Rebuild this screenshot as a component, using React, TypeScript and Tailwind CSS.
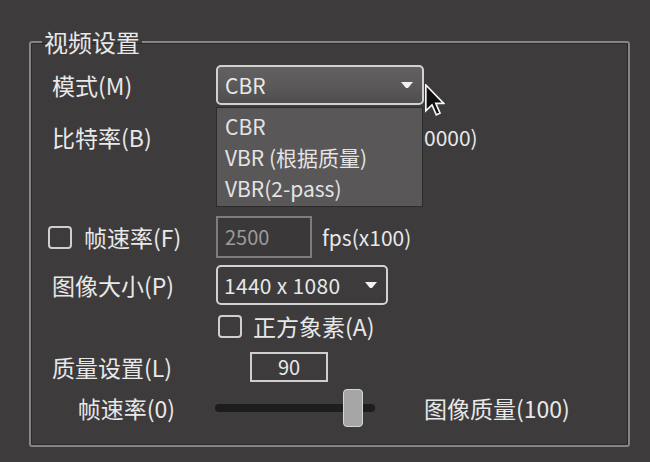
import React from "react"

const font = { fontFamily: '"Noto Sans CJK SC", "Noto Sans", sans-serif' }

function DownArrow() {
  return (
    <svg width="12" height="7" viewBox="0 0 12 7" className="shrink-0">
      <path d="M0 0 H12 L7 6 H5 Z" fill="#f2f2f2" />
    </svg>
  )
}

function Checkbox() {
  return <div className="w-[24px] h-[23px] rounded-[4px] border-2 border-[#cfcfcf] shrink-0" />
}

function Cursor() {
  return (
    <svg width="20" height="32" viewBox="0 0 12 19" className="absolute left-[209px] top-[19px]">
      <path
        d="M0.5 0.5 L0.5 16 L4.2 12.4 L6.8 18.4 L9 17.4 L6.5 11.5 L11.2 11.5 Z"
        fill="#111"
        stroke="#f5f5f5"
        strokeWidth="1"
        strokeLinejoin="miter"
      />
    </svg>
  )
}

export default function App() {
  const options = ["CBR", "VBR (根据质量)", "VBR(2-pass)"]

  return (
    <div className="w-[650px] h-[462px] bg-[#3d3b3c] text-[#e8e8e8] overflow-hidden" style={font}>
      <fieldset className="ml-[29px] mt-[28px] w-[601px] h-[419px] border-2 border-[#858585] rounded-[3px] shadow-[inset_-1px_-1px_0_#2a2a2a,inset_1px_1px_0_#2a2a2a]">
        <legend className="ml-[11px] px-[2px] text-[24px] leading-[28px]">视频设置</legend>

        <div className="flex flex-col pl-[21px] text-[23px] leading-none">
          {/* 模式 */}
          <div className="flex items-center h-[40px] mt-[9px]">
            <div className="w-[164px]">模式(M)</div>
            <div className="relative">
              <div className="w-[208px] h-[40px] rounded-[5px] border-2 border-[#d2d2d2] bg-gradient-to-b from-[#626061] via-[#5b595a] to-[#4f4d4e] flex items-center justify-between pl-[7px] pr-[9px] text-[21px]">
                <span>CBR</span>
                <DownArrow />
              </div>
              <div className="absolute left-0 top-[42px] w-[207px] h-[100px] bg-[#595758] border border-[#2c2c2c] pt-[3px] z-10 text-[21px] text-[#e4e4e4]">
                {options.map((o) => (
                  <div key={o} className="h-[31px] flex items-center pl-[8px]">
                    {o}
                  </div>
                ))}
              </div>
              <Cursor />
            </div>
          </div>

          {/* 比特率 */}
          <div className="flex items-center h-[40px] mt-[12px]">
            <div className="w-[372px]">比特率(B)</div>
            <span className="text-[21px]">0000)</span>
          </div>

          {/* 帧速率 */}
          <div className="flex items-center h-[42px] mt-[59px]">
            <div className="w-[164px] flex items-center gap-[12px] -ml-[4px]">
              <Checkbox />
              <span>帧速率(F)</span>
            </div>
            <div className="w-[96px] h-[42px] ml-[4px] border-2 border-[#7d7d7d] bg-[#3a3839] flex items-center pl-[7px] text-[20px] text-[#9c9c9c]">
              2500
            </div>
            <span className="ml-[10px] text-[21px]">fps(x100)</span>
          </div>

          {/* 图像大小 */}
          <div className="flex items-center h-[40px] mt-[7px]">
            <div className="w-[164px]">图像大小(P)</div>
            <div className="w-[172px] h-[40px] rounded-[5px] border-2 border-[#d2d2d2] flex items-center justify-between pl-[6px] pr-[9px] text-[21px]">
              <span className="tracking-[0.3px]">1440 x 1080</span>
              <DownArrow />
            </div>
          </div>

          {/* 正方象素 */}
          <div className="flex items-center h-[24px] mt-[9px] pl-[166px] gap-[11px]">
            <Checkbox />
            <span>正方象素(A)</span>
          </div>

          {/* 质量设置 */}
          <div className="flex items-center h-[30px] mt-[14px]">
            <div className="w-[198px]">质量设置(L)</div>
            <div className="w-[78px] h-[30px] border-2 border-[#cfcfcf] flex items-center justify-center text-[20px]">
              90
            </div>
          </div>

          {/* slider */}
          <div className="flex items-center h-[38px] mt-[7px]">
            <div className="w-[123px] text-right">帧速率(0)</div>
            <div className="relative w-[160px] h-[38px] ml-[40px] flex items-center">
              <div className="w-full h-[8px] rounded-full bg-[#1e1d1d]" />
              <div className="absolute left-[128px] top-0 w-[20px] h-[38px] rounded-[4px] bg-[#a6a6a6] border border-[#d6d6d6]" />
            </div>
            <span className="ml-[49px]">图像质量(100)</span>
          </div>
        </div>
      </fieldset>
    </div>
  )
}
